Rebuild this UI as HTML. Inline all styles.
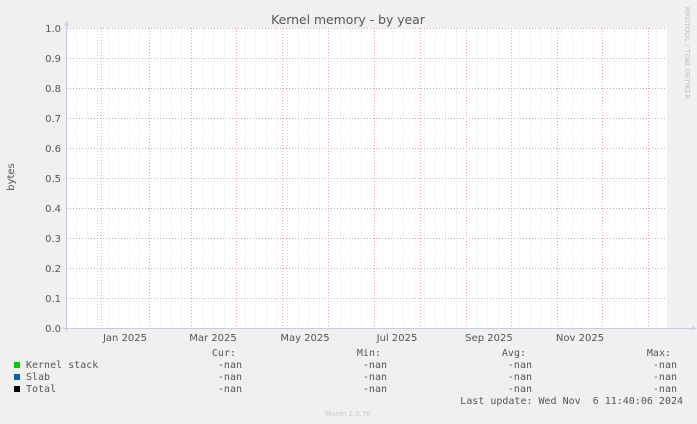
<!DOCTYPE html>
<html><head><meta charset="utf-8"><style>
html,body{margin:0;padding:0;background:#f0f0f0;}
svg{display:block;}
</style></head><body>
<svg width="697" height="424" xmlns="http://www.w3.org/2000/svg">
<rect width="697" height="424" fill="#f0f0f0"/>
<rect x="67" y="28" width="600" height="300" fill="#ffffff"/>
<g stroke="#dedede" stroke-width="1" stroke-dasharray="1,2">
<line x1="76.5" y1="28" x2="76.5" y2="328"/><line x1="87.5" y1="28" x2="87.5" y2="328"/><line x1="97.5" y1="28" x2="97.5" y2="328"/><line x1="108.5" y1="28" x2="108.5" y2="328"/><line x1="118.5" y1="28" x2="118.5" y2="328"/><line x1="129.5" y1="28" x2="129.5" y2="328"/><line x1="139.5" y1="28" x2="139.5" y2="328"/><line x1="160.5" y1="28" x2="160.5" y2="328"/><line x1="171.5" y1="28" x2="171.5" y2="328"/><line x1="181.5" y1="28" x2="181.5" y2="328"/><line x1="203.5" y1="28" x2="203.5" y2="328"/><line x1="213.5" y1="28" x2="213.5" y2="328"/><line x1="224.5" y1="28" x2="224.5" y2="328"/><line x1="245.5" y1="28" x2="245.5" y2="328"/><line x1="255.5" y1="28" x2="255.5" y2="328"/><line x1="266.5" y1="28" x2="266.5" y2="328"/><line x1="276.5" y1="28" x2="276.5" y2="328"/><line x1="287.5" y1="28" x2="287.5" y2="328"/><line x1="298.5" y1="28" x2="298.5" y2="328"/><line x1="308.5" y1="28" x2="308.5" y2="328"/><line x1="319.5" y1="28" x2="319.5" y2="328"/><line x1="340.5" y1="28" x2="340.5" y2="328"/><line x1="350.5" y1="28" x2="350.5" y2="328"/><line x1="361.5" y1="28" x2="361.5" y2="328"/><line x1="382.5" y1="28" x2="382.5" y2="328"/><line x1="392.5" y1="28" x2="392.5" y2="328"/><line x1="403.5" y1="28" x2="403.5" y2="328"/><line x1="414.5" y1="28" x2="414.5" y2="328"/><line x1="424.5" y1="28" x2="424.5" y2="328"/><line x1="435.5" y1="28" x2="435.5" y2="328"/><line x1="445.5" y1="28" x2="445.5" y2="328"/><line x1="456.5" y1="28" x2="456.5" y2="328"/><line x1="477.5" y1="28" x2="477.5" y2="328"/><line x1="487.5" y1="28" x2="487.5" y2="328"/><line x1="498.5" y1="28" x2="498.5" y2="328"/><line x1="519.5" y1="28" x2="519.5" y2="328"/><line x1="530.5" y1="28" x2="530.5" y2="328"/><line x1="540.5" y1="28" x2="540.5" y2="328"/><line x1="551.5" y1="28" x2="551.5" y2="328"/><line x1="561.5" y1="28" x2="561.5" y2="328"/><line x1="572.5" y1="28" x2="572.5" y2="328"/><line x1="582.5" y1="28" x2="582.5" y2="328"/><line x1="593.5" y1="28" x2="593.5" y2="328"/><line x1="614.5" y1="28" x2="614.5" y2="328"/><line x1="625.5" y1="28" x2="625.5" y2="328"/><line x1="635.5" y1="28" x2="635.5" y2="328"/><line x1="656.5" y1="28" x2="656.5" y2="328"/>
</g>
<g stroke="#f0a0a0" stroke-width="1" stroke-dasharray="1,2">
<line x1="101.5" y1="28" x2="101.5" y2="328"/>
<line x1="149.5" y1="28" x2="149.5" y2="328"/>
<line x1="191.5" y1="28" x2="191.5" y2="328"/>
<line x1="236.5" y1="28" x2="236.5" y2="328"/>
<line x1="282.5" y1="28" x2="282.5" y2="328"/>
<line x1="328.5" y1="28" x2="328.5" y2="328"/>
<line x1="374.5" y1="28" x2="374.5" y2="328"/>
<line x1="420.5" y1="28" x2="420.5" y2="328"/>
<line x1="466.5" y1="28" x2="466.5" y2="328"/>
<line x1="511.5" y1="28" x2="511.5" y2="328"/>
<line x1="557.5" y1="28" x2="557.5" y2="328"/>
<line x1="602.5" y1="28" x2="602.5" y2="328"/>
<line x1="648.5" y1="28" x2="648.5" y2="328"/>
</g>
<g stroke="#c8b0b0" stroke-width="1" stroke-dasharray="1,2">
<line x1="67" y1="28.5" x2="667" y2="28.5"/>
<line x1="67" y1="58.5" x2="667" y2="58.5"/>
<line x1="67" y1="88.5" x2="667" y2="88.5"/>
<line x1="67" y1="118.5" x2="667" y2="118.5"/>
<line x1="67" y1="148.5" x2="667" y2="148.5"/>
<line x1="67" y1="178.5" x2="667" y2="178.5"/>
<line x1="67" y1="208.5" x2="667" y2="208.5"/>
<line x1="67" y1="238.5" x2="667" y2="238.5"/>
<line x1="67" y1="268.5" x2="667" y2="268.5"/>
<line x1="67" y1="298.5" x2="667" y2="298.5"/>
</g>
<line x1="66.5" y1="24" x2="66.5" y2="332" stroke="#c8c8f0"/>
<line x1="63" y1="328.5" x2="692" y2="328.5" stroke="#c8c8f0"/>
<polygon points="64,26 69,26 66.5,20" fill="#d0d0f8"/>
<polygon points="692,326 692,331 697,328.5" fill="#d0d0f8"/>
<g font-family="DejaVu Sans, Liberation Sans, sans-serif" font-size="10" fill="#555" text-anchor="end">
<text x="61" y="32">1.0</text>
<text x="61" y="62">0.9</text>
<text x="61" y="92">0.8</text>
<text x="61" y="122">0.7</text>
<text x="61" y="152">0.6</text>
<text x="61" y="182">0.5</text>
<text x="61" y="212">0.4</text>
<text x="61" y="242">0.3</text>
<text x="61" y="272">0.2</text>
<text x="61" y="302">0.1</text>
<text x="61" y="332">0.0</text>
</g>
<g font-family="DejaVu Sans, Liberation Sans, sans-serif" font-size="10" fill="#555" text-anchor="middle">
<text x="125" y="341">Jan 2025</text>
<text x="213" y="341">Mar 2025</text>
<text x="305" y="341">May 2025</text>
<text x="397" y="341">Jul 2025</text>
<text x="489" y="341">Sep 2025</text>
<text x="580" y="341">Nov 2025</text>
</g>
<text x="348" y="24" font-family="DejaVu Sans, Liberation Sans, sans-serif" font-size="12.4" fill="#555" text-anchor="middle">Kernel memory - by year</text>
<text transform="translate(14,177) rotate(-90)" font-family="DejaVu Sans, Liberation Sans, sans-serif" font-size="10" fill="#555" text-anchor="middle">bytes</text>
<text transform="translate(685,53) rotate(90)" font-family="DejaVu Sans, Liberation Sans, sans-serif" font-size="7.2" fill="#c0c0c0" text-anchor="middle">RRDTOOL / TOBI OETIKER</text>
<rect x="14" y="362" width="6" height="6" fill="#00cc00"/>
<rect x="14" y="374" width="6" height="6" fill="#0066b3"/>
<rect x="14" y="386" width="6" height="6" fill="#000000"/>
<g font-family="DejaVu Sans Mono, Liberation Mono, monospace" font-size="10" fill="#555">
<text x="26" y="368">Kernel stack</text>
<text x="26" y="380">Slab</text>
<text x="26" y="392">Total</text>
</g>
<g font-family="DejaVu Sans Mono, Liberation Mono, monospace" font-size="10" fill="#555" text-anchor="end">
<text x="236" y="356">Cur:</text>
<text x="242" y="368">-nan</text>
<text x="242" y="380">-nan</text>
<text x="242" y="392">-nan</text>
<text x="381" y="356">Min:</text>
<text x="387" y="368">-nan</text>
<text x="387" y="380">-nan</text>
<text x="387" y="392">-nan</text>
<text x="526" y="356">Avg:</text>
<text x="532" y="368">-nan</text>
<text x="532" y="380">-nan</text>
<text x="532" y="392">-nan</text>
<text x="671" y="356">Max:</text>
<text x="677" y="368">-nan</text>
<text x="677" y="380">-nan</text>
<text x="677" y="392">-nan</text>
<text x="683" y="404" xml:space="preserve">Last update: Wed Nov  6 11:40:06 2024</text>
</g>
<text x="348" y="416" font-family="DejaVu Sans, Liberation Sans, sans-serif" font-size="7" fill="#c8c8c8" text-anchor="middle">Munin 2.0.76</text>
</svg>
</body></html>
